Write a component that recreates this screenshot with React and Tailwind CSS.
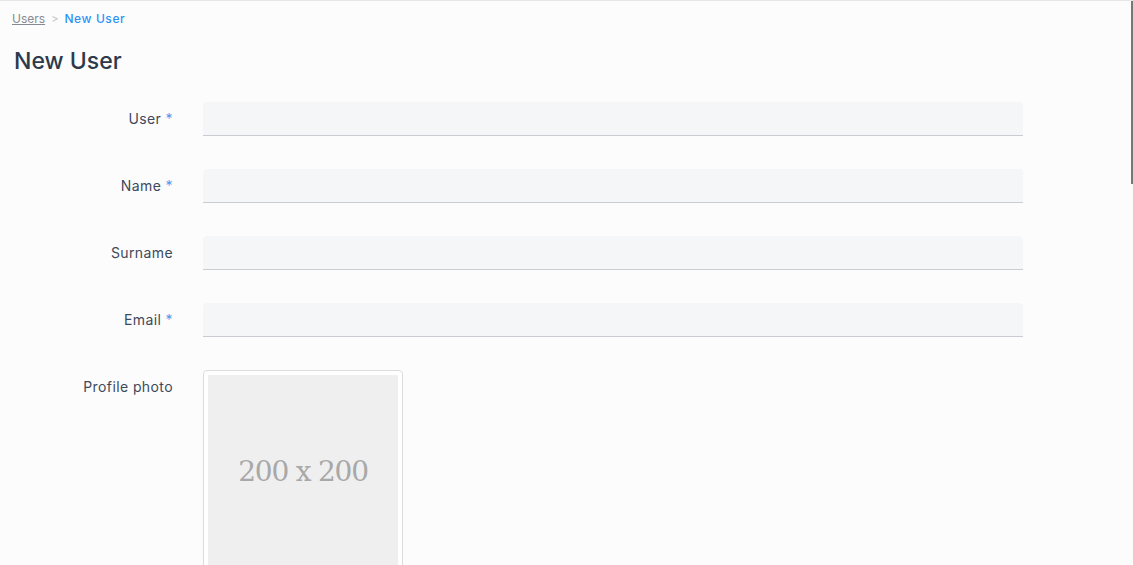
import React from "react";

const fields = [
    { label: "User", required: true },
    { label: "Name", required: true },
    { label: "Surname", required: false },
    { label: "Email", required: true },
];

const FieldRow = ({ label, required }) => {
    return (
        <div className="flex items-center h-[34px] mb-[33px]">
            <label className="w-[173px] pb-[2px] text-right text-[14px] tracking-[0.4px] text-[#3d4a5c]">
                {label}
                {required && <span className="text-[#4a9cf0]"> *</span>}
            </label>
            <div className="ml-[30px] w-[820px] h-[34px] bg-[#f5f6f8] rounded-t-[4px] border-b border-[#c9ccd2]" />
        </div>
    );
};

const App = () => {
    return (
        <div
            className="relative w-[1133px] h-[565px] overflow-hidden bg-[#fcfcfc] border-t border-[#e6e6e6]"
            style={{ fontFamily: "Inter, 'Noto Sans', sans-serif" }}
        >
            {/* scrollbar thumb */}
            <div className="absolute right-0 top-0 w-[2px] h-[183px] bg-[#777]" />

            {/* Breadcrumb */}
            <div className="flex items-center gap-[6px] pl-[12px] pt-[10px] text-[12px] leading-[16px]">
                <span className="text-[#868b92] underline">Users</span>
                <span className="text-[#c0c4c9] text-[11px]">&gt;</span>
                <span className="text-[#2e93f5] font-medium tracking-[0.6px]">New User</span>
            </div>

            {/* Title */}
            <h1 className="pl-[14px] mt-[18px] text-[23px] leading-[32px] font-medium text-[#2c3a4b]">
                New User
            </h1>

            {/* Form */}
            <div className="mt-[25px]">
                {fields.map((f) => (
                    <FieldRow key={f.label} label={f.label} required={f.required} />
                ))}

                <div className="flex items-start">
                    <label className="w-[173px] text-right text-[14px] tracking-[0.4px] text-[#3d4a5c] pt-[6px]">
                        Profile photo
                    </label>
                    <div className="ml-[30px] w-[200px] h-[200px] border border-[#dcdcdc] rounded-[4px] p-[4px] bg-white">
                        <div className="w-full h-full pt-[4px] bg-[#efefef] flex items-center justify-center">
                            <span
                                className="text-[#a8a8a8] text-[28px] tracking-[-1.2px]"
                                style={{ fontFamily: "'DejaVu Serif', 'Liberation Serif', serif" }}
                            >
                                200 x 200
                            </span>
                        </div>
                    </div>
                </div>
            </div>
        </div>
    );
};

export default App;
